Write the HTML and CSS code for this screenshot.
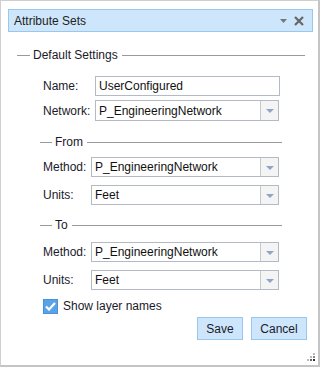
FILE: index.html
```html
<!DOCTYPE html>
<html>
<head>
<meta charset="utf-8">
<link rel="stylesheet" href="styles.css">
</head>
<body>
<div class="dialog">
  <div class="titlebar">
    <span class="title">Attribute Sets</span>
    <span class="tools">
      <svg class="menu" width="8" height="5" viewBox="0 0 8 5"><path d="M0 0 H7 L3.5 4 Z" fill="#777"/></svg>
      <svg class="close" width="10" height="10" viewBox="0 0 10 10"><path d="M1 1 L9 9 M9 1 L1 9" stroke="#666" stroke-width="2.2"/></svg>
    </span>
  </div>

  <div class="legend legend-main"><span>Default Settings</span></div>

  <div class="row row-name">
    <label class="lbl lbl-wide">Name:</label>
    <div class="input name-input">UserConfigured</div>
  </div>
  <div class="row row-net">
    <label class="lbl lbl-wide">Network:</label>
    <div class="select net-select"><span class="val">P_EngineeringNetwork</span><span class="arrow"><i></i></span></div>
  </div>

  <div class="legend legend-sub legend-from"><span>From</span></div>
  <div class="row row-m1">
    <label class="lbl">Method:</label>
    <div class="select"><span class="val">P_EngineeringNetwork</span><span class="arrow"><i></i></span></div>
  </div>
  <div class="row row-u">
    <label class="lbl">Units:</label>
    <div class="select"><span class="val">Feet</span><span class="arrow"><i></i></span></div>
  </div>

  <div class="legend legend-sub legend-to"><span>To</span></div>
  <div class="row row-m2">
    <label class="lbl">Method:</label>
    <div class="select"><span class="val">P_EngineeringNetwork</span><span class="arrow"><i></i></span></div>
  </div>
  <div class="row row-u">
    <label class="lbl">Units:</label>
    <div class="select"><span class="val">Feet</span><span class="arrow"><i></i></span></div>
  </div>

  <div class="check-row">
    <span class="checkbox"><svg width="11" height="9" viewBox="0 0 11 9"><path d="M1 4.5 L4 7.5 L10 1" fill="none" stroke="#fff" stroke-width="2.2"/></svg></span>
    <span class="check-label">Show layer names</span>
  </div>

  <div class="buttons">
    <button class="btn btn-save">Save</button>
    <button class="btn btn-cancel">Cancel</button>
  </div>

  <svg class="grip" width="10" height="10" viewBox="0 0 10 10">
    <rect x="7" y="0" width="2" height="2" fill="#bbb"/>
    <rect x="4" y="3" width="2" height="2" fill="#bbb"/>
    <rect x="7" y="3" width="2" height="2" fill="#888"/>
    <rect x="1" y="6" width="2" height="2" fill="#bbb"/>
    <rect x="4" y="6" width="2" height="2" fill="#666"/>
    <rect x="7" y="6" width="2" height="2" fill="#333"/>
  </svg>
</div>
</body>
</html>
```

FILE: styles.css
```css
* { box-sizing: border-box; }
html, body { margin: 0; padding: 0; background: #fff; }
body {
  font-family: "Liberation Sans", Arial, sans-serif;
  font-size: 12px;
  color: #1a1a2a;
}
.dialog {
  position: relative;
  width: 320px;
  height: 367px;
  border: 1px solid #cfcfcf;
  border-right: 2px solid #c4c4c4;
  border-bottom: 2px solid #c4c4c4;
  background: #fff;
  padding: 8px 0 0 7px;
  display: flex;
  flex-direction: column;
}
.titlebar {
  width: 305px;
  height: 23px;
  background: #cde6fb;
  border: 1px solid #98c8ee;
  display: flex;
  align-items: center;
  justify-content: space-between;
  padding: 0 8px 0 5px;
}
.title { font-size: 12px; color: #222; }
.tools { display: flex; align-items: center; gap: 6px; }
.menu { margin-top: 1px; }

.legend {
  display: flex;
  align-items: center;
  height: 16px;
}
.legend::before, .legend::after {
  content: "";
  height: 1px;
  background: #9a9a9a;
}
.legend::after { flex: 1; }
.legend span { padding: 0 4px 0 3px; color: #1a1a2a; }
.legend-main { margin-top: 15px; margin-left: 9px; width: 288px; }
.legend-main::before { width: 13px; }
.legend-sub { margin-left: 32px; width: 242px; }
.legend-sub::before { width: 12px; }
.legend-from { margin-top: 13px; }
.legend-to { margin-top: 12px; }

.row { display: flex; align-items: center; margin-left: 35px; }
.lbl { width: 48px; color: #1a1a2a; }
.lbl-wide { width: 52px; }
.row-name { margin-top: 13px; }
.row-net { margin-top: 4px; }
.row-m1 { margin-top: 7px; }
.row-m2 { margin-top: 9px; }
.row-u { margin-top: 8px; }

.input, .select {
  height: 20px;
  border: 1px solid #b4bac4;
  background: #fff;
  display: flex;
  align-items: center;
  color: #111;
}
.input { width: 185px; padding-left: 3px; }
.name-input { height: 20px; }
.select { width: 188px; }
.net-select { width: 184px; height: 21px; }
.val { flex: 1; padding-left: 3px; white-space: nowrap; overflow: hidden; }
.arrow {
  width: 18px;
  height: 100%;
  border-left: 1px solid #c4c9d1;
  background: #f4f4f4;
  display: flex;
  align-items: center;
  justify-content: center;
}
.arrow i {
  width: 0; height: 0;
  border-left: 4px solid transparent;
  border-right: 4px solid transparent;
  border-top: 4px solid #8ea5c6;
  margin-top: 1px;
}

.check-row {
  display: flex;
  align-items: center;
  margin-left: 35px;
  margin-top: 8px;
  height: 16px;
}
.checkbox {
  width: 15px;
  height: 15px;
  background: #5aa3e8;
  border: 1px solid #4a92d8;
  display: flex;
  align-items: center;
  justify-content: center;
  margin-right: 5px;
}
.check-label { color: #1a1a2a; }

.buttons {
  display: flex;
  justify-content: flex-end;
  gap: 8px;
  margin-top: 3px;
  width: 299px;
}
.btn {
  font-family: "Liberation Sans", Arial, sans-serif;
  font-size: 12px;
  color: #1a1a2a;
  height: 23px;
  background: #cde6fb;
  border: 1px solid #98c8ee;
  padding: 0;
  margin: 0;
}
.btn-save { width: 46px; }
.btn-cancel { width: 56px; }

.grip { position: absolute; right: 2px; bottom: 2px; }
```
